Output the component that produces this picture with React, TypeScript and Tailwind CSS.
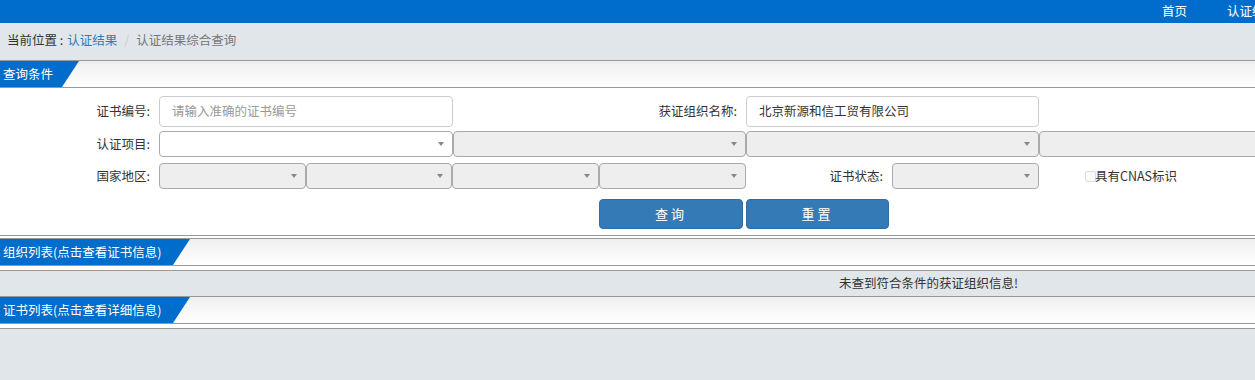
import React from 'react';

const font = { fontFamily: '"Microsoft YaHei", "Noto Sans CJK SC", "Liberation Sans", sans-serif' };

const Caret = () => (
  <span className="absolute right-[8px] top-1/2 -translate-y-1/2 w-0 h-0 border-l-[3.5px] border-r-[3.5px] border-t-[4px] border-l-transparent border-r-transparent border-t-[#888]" />
);

const Select: React.FC<{ w: string; disabled?: boolean }> = ({ w, disabled = true }) => (
  <div className={`relative ${w} h-[26px] shrink-0 border border-[#aaa] rounded-[4px] ${disabled ? 'bg-[#eee]' : 'bg-white'}`}>
    <Caret />
  </div>
);

const SectionHead: React.FC<{ title: string; w: string }> = ({ title, w }) => (
  <div className="h-[28px] border-t border-b border-[#999] bg-linear-to-b from-[#efefef] to-white flex">
    <div className={`${w} h-full bg-[#006dcc] text-white pl-[3px] flex items-center [clip-path:polygon(0_0,100%_0,calc(100%-17px)_100%,0_100%)]`}>
      {title}
    </div>
  </div>
);

const Label: React.FC<{ children: React.ReactNode; w: string }> = ({ children, w }) => (
  <div className={`${w} shrink-0 text-right pr-[9px] text-[#333]`}>{children}</div>
);

export default function App() {
  return (
    <div className="w-[1255px] h-[380px] overflow-hidden bg-[#e1e6ea] text-[12.5px]" style={font}>
      {/* top bar */}
      <div className="h-[23px] bg-[#006dcc] text-white flex items-center whitespace-nowrap">
        <span className="ml-[1162px] shrink-0">首页</span>
        <span className="ml-[40px] shrink-0">认证结果</span>
      </div>

      {/* breadcrumb */}
      <div className="h-[37px] flex items-center pl-[7px] pb-[2px]">
        <span className="text-[#333]">当前位置 : </span>
        <span className="text-[#337ab7] ml-[4px]">认证结果</span>
        <span className="text-[#ccc] mx-[7px]">/</span>
        <span className="text-[#777]">认证结果综合查询</span>
      </div>

      {/* query panel */}
      <SectionHead title="查询条件" w="w-[79px]" />
      <div className="bg-white h-[148px] border-b border-[#999] pt-[8px] flex flex-col whitespace-nowrap">
        <div className="flex items-center h-[31px]">
          <Label w="w-[159px]">证书编号:</Label>
          <div className="w-[294px] h-[31px] shrink-0 border border-[#ccc] rounded-[4px] flex items-center pl-[12px] text-[#999]">
            请输入准确的证书编号
          </div>
          <Label w="w-[293px]">获证组织名称:</Label>
          <div className="w-[293px] h-[31px] shrink-0 border border-[#ccc] rounded-[4px] flex items-center pl-[12px] text-[#333]">
            北京新源和信工贸有限公司
          </div>
        </div>

        <div className="flex items-center mt-[4px]">
          <Label w="w-[159px]">认证项目:</Label>
          <Select w="w-[294px]" disabled={false} />
          <Select w="w-[293px]" />
          <Select w="w-[293px]" />
          <Select w="w-[293px]" />
        </div>

        <div className="flex items-center mt-[6px]">
          <Label w="w-[159px]">国家地区:</Label>
          <Select w="w-[147px]" />
          <Select w="w-[146px]" />
          <Select w="w-[147px]" />
          <Select w="w-[147px]" />
          <Label w="w-[146px]">证书状态:</Label>
          <Select w="w-[147px]" />
          <div className="flex items-center ml-[46px] text-[#333]">
            <span className="w-[11px] h-[11px] border border-[#ddd] rounded-[2px] bg-[#fafafa] mr-[-1px]" />
            <span>具有CNAS标识</span>
          </div>
        </div>

        <div className="flex mt-[10px] ml-[599px] gap-[3px]">
          <button className="w-[144px] h-[30px] bg-[#337ab7] border border-[#2e6da4] rounded-[4px] text-white text-[13px] tracking-[3px]">
            查询
          </button>
          <button className="w-[143px] h-[30px] bg-[#337ab7] border border-[#2e6da4] rounded-[4px] text-white text-[13px] tracking-[3px]">
            重置
          </button>
        </div>
      </div>

      <div className="h-[2px] bg-white" />

      {/* org list */}
      <SectionHead title="组织列表(点击查看证书信息)" w="w-[190px]" />
      <div className="h-[4px] bg-white" />
      <div className="h-[27px] border-t border-b border-[#999] flex items-center pl-[839px] text-[#333]">
        未查到符合条件的获证组织信息!
      </div>

      {/* cert list */}
      <div className="h-[27px] border-b border-[#999] bg-linear-to-b from-[#efefef] to-white flex">
        <div className="w-[190px] h-full bg-[#006dcc] text-white pl-[3px] flex items-center [clip-path:polygon(0_0,100%_0,calc(100%-17px)_100%,0_100%)]">
          证书列表(点击查看详细信息)
        </div>
      </div>
      <div className="h-[5px] bg-white border-b border-[#999]" />
    </div>
  );
}
